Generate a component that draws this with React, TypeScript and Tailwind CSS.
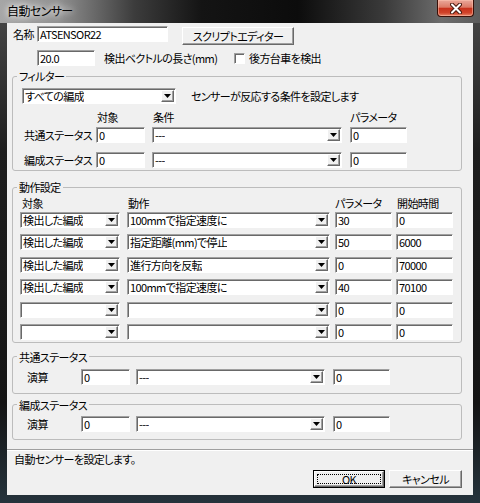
import React from "react";

const sunken =
  "bg-white border border-t-[#a0a0a0] border-l-[#a0a0a0] border-b-white border-r-white shadow-[inset_1px_1px_0_#696969]";
const raised =
  "bg-[#f0f0f0] border border-t-white border-l-white border-b-[#696969] border-r-[#696969] shadow-[inset_-1px_-1px_0_#a0a0a0]";

function Field({ w, value }: { w: string; value?: string }) {
  return (
    <div className={`${w} h-[16px] ${sunken} flex items-center pl-[2px] overflow-hidden`}>
      {value}
    </div>
  );
}

function Arrow() {
  return (
    <div className={`w-[13px] h-[12px] mr-[1px] shrink-0 ${raised} flex items-center justify-center`}>
      <svg width="7" height="4" viewBox="0 0 7 4">
        <polygon points="0,0 7,0 3.5,4" fill="#000" />
      </svg>
    </div>
  );
}

function Combo({ w, value }: { w: string; value?: string }) {
  return (
    <div className={`${w} h-[16px] ${sunken} flex items-center justify-between`}>
      <span className="pl-[2px] overflow-hidden">{value}</span>
      <Arrow />
    </div>
  );
}

function Btn({ w, children, def }: { w: string; children: React.ReactNode; def?: boolean }) {
  return (
    <div className={`${w} h-[18px] flex ${def ? "border border-black" : ""}`}>
      <div className={`flex-1 ${raised} flex items-center justify-center`}>
        {def ? (
          <div className="w-[calc(100%-4px)] h-[calc(100%-4px)] border border-dotted border-black flex items-center justify-center">
            {children}
          </div>
        ) : (
          children
        )}
      </div>
    </div>
  );
}

function Group({ title, className, children }: { title: string; className: string; children: React.ReactNode }) {
  return (
    <fieldset className={`ml-[5px] w-[450px] border border-[#bcbcbc] rounded-[3px] ${className}`}>
      <legend className="ml-[4px] px-[2px] leading-[14px]">{title}</legend>
      {children}
    </fieldset>
  );
}

const actions = [
  ["検出した編成", "100mmで指定速度に", "30", "0"],
  ["検出した編成", "指定距離(mm)で停止", "50", "6000"],
  ["検出した編成", "進行方向を反転", "0", "70000"],
  ["検出した編成", "100mmで指定速度に", "40", "70100"],
  ["", "", "0", "0"],
  ["", "", "0", "0"],
];

export default function App() {
  return (
    <div className="w-[480px] h-[503px] flex flex-col overflow-hidden bg-[linear-gradient(180deg,#4a4a4a_0%,#1e1e1e_30%,#141414_80%,#25333c_100%)] font-['Noto_Sans_CJK_JP',sans-serif] [font-feature-settings:'palt'] text-[11px] tracking-[-0.6px] leading-[14px] whitespace-nowrap text-black">
      {/* title bar */}
      <div className="h-[23px] flex items-start justify-between bg-[linear-gradient(90deg,#a6a6a6_0%,#929292_12%,#3c3c3c_28%,#141414_42%,#0c0c0c_62%,#3a3a3a_80%,#6c6c6c_92%,#5c5c5c_100%)]">
        <span className="ml-[7px] mt-[4px] text-[12px] [text-shadow:0_0_6px_#fff,0_0_10px_#fff]">自動センサー</span>
        <div className="mr-[6px] w-[37px] h-[17px] border border-t-0 border-[#3a1008] rounded-b-[4px] bg-[linear-gradient(180deg,#eaa89a_0%,#dc7a66_45%,#c8321c_52%,#d0432a_80%,#e8886c_100%)] shadow-[inset_0_0_0_1px_rgba(255,200,180,0.5)] flex items-center justify-center">
          <svg width="12" height="11" viewBox="0 0 12 11">
            <path d="M2 1.5 L10 9.5 M10 1.5 L2 9.5" stroke="#4a1a10" strokeWidth="4" strokeLinecap="round" />
            <path d="M2 1.5 L10 9.5 M10 1.5 L2 9.5" stroke="#fff" strokeWidth="2" strokeLinecap="round" />
          </svg>
        </div>
      </div>

      {/* client */}
      <div className="ml-[7px] w-[466px] h-[472px] bg-[#f0f0f0] flex flex-col">
        <div className="ml-[5px] mt-[3px] flex items-start h-[18px]">
          <span className="w-[25px] mt-[1px] pl-[1px]">名称</span>
          <Field w="w-[131px]" value="ATSENSOR22" />
          <div className="ml-[14px] mt-[1px]">
            <Btn w="w-[112px]">スクリプトエディター</Btn>
          </div>
        </div>

        <div className="ml-[30px] mt-[6px] flex items-center">
          <Field w="w-[58px]" value="20.0" />
          <span className="ml-[9px] w-[130px]">検出ベクトルの長さ(mm)</span>
          <div className={`w-[11px] h-[11px] ${sunken}`} />
          <span className="ml-[4px]">後方台車を検出</span>
        </div>

        <Group title="フィルター" className="mt-[3px]">
          <div className="pl-[9px] pt-[5px] pb-[2px]">
            <div className="flex items-center">
              <Combo w="w-[154px]" value="すべての編成" />
              <span className="ml-[15px]">センサーが反応する条件を設定します</span>
            </div>
            <div className="mt-[6px] flex">
              <span className="w-[74px]" />
              <span className="w-[56px] pl-[1px]">対象</span>
              <span className="w-[198px] pl-[1px]">条件</span>
              <span>パラメータ</span>
            </div>
            <div className="mt-[3px] flex items-center">
              <span className="w-[74px] pl-[2px]">共通ステータス</span>
              <Field w="w-[49px]" value="0" />
              <div className="ml-[7px]">
                <Combo w="w-[190px]" value="---" />
              </div>
              <div className="ml-[8px]">
                <Field w="w-[57px]" value="0" />
              </div>
            </div>
            <div className="mt-[9px] flex items-center">
              <span className="w-[74px] pl-[2px]">編成ステータス</span>
              <Field w="w-[49px]" value="0" />
              <div className="ml-[7px]">
                <Combo w="w-[190px]" value="---" />
              </div>
              <div className="ml-[8px]">
                <Field w="w-[57px]" value="0" />
              </div>
            </div>
          </div>
        </Group>

        <Group title="動作設定" className="mt-[9px]">
          <div className="pl-[7px] pt-[2px] pb-[2px]">
            <div className="flex">
              <span className="w-[107px] pl-[2px]">対象</span>
              <span className="w-[208px] pl-[1px]">動作</span>
              <span className="w-[61px]">パラメータ</span>
              <span className="pl-[1px]">開始時間</span>
            </div>
            <div className="mt-[2px] flex flex-col gap-[6.4px]">
              {actions.map((a, i) => (
                <div key={i} className="flex items-center">
                  <Combo w="w-[100px]" value={a[0]} />
                  <div className="ml-[7px]">
                    <Combo w="w-[203px]" value={a[1]} />
                  </div>
                  <div className="ml-[5px]">
                    <Field w="w-[57px]" value={a[2]} />
                  </div>
                  <div className="ml-[4px]">
                    <Field w="w-[57px]" value={a[3]} />
                  </div>
                </div>
              ))}
            </div>
          </div>
        </Group>

        <Group title="共通ステータス" className="mt-[7px]">
          <div className="pl-[14px] pt-[5px] pb-[8px] flex items-center">
            <span className="w-[54px]">演算</span>
            <Field w="w-[49px]" value="0" />
            <div className="ml-[6px]">
              <Combo w="w-[189px]" value="---" />
            </div>
            <div className="ml-[8px]">
              <Field w="w-[57px]" value="0" />
            </div>
          </div>
        </Group>

        <Group title="編成ステータス" className="mt-[4px]">
          <div className="pl-[14px] pt-[4px] pb-[7px] flex items-center">
            <span className="w-[54px]">演算</span>
            <Field w="w-[49px]" value="0" />
            <div className="ml-[6px]">
              <Combo w="w-[189px]" value="---" />
            </div>
            <div className="ml-[8px]">
              <Field w="w-[57px]" value="0" />
            </div>
          </div>
        </Group>

        <div className="mt-[9px] h-[2px] border-t border-t-[#a0a0a0] border-b border-b-white" />
        <span className="mt-[1px] ml-[7px]">自動センサーを設定します。</span>
        <div className="mt-[4px] mr-[11px] flex justify-end gap-[4px]">
          <Btn w="w-[72px]" def>
            OK
          </Btn>
          <Btn w="w-[73px]">キャンセル</Btn>
        </div>
      </div>
    </div>
  );
}
